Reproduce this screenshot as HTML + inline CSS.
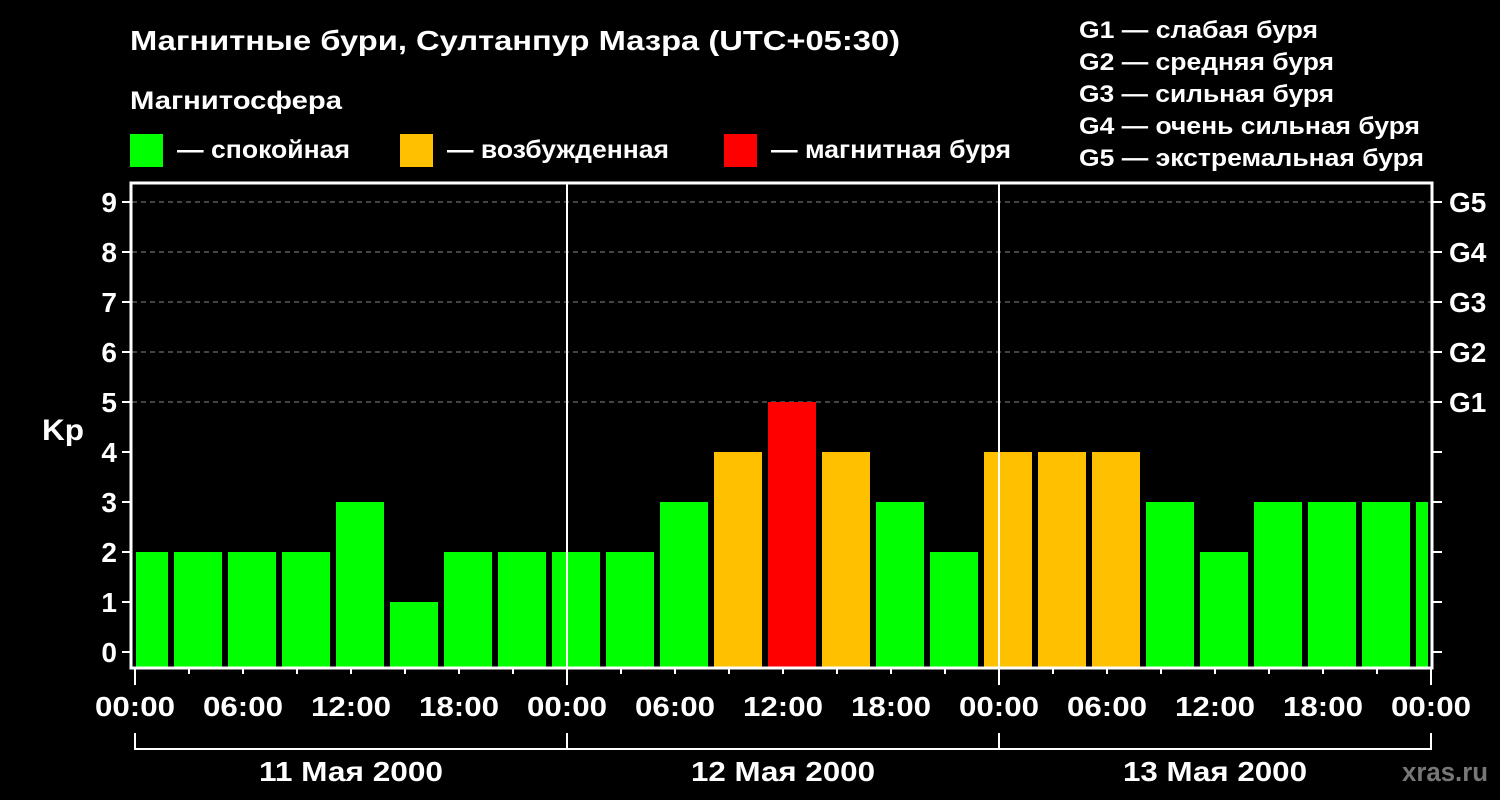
<!DOCTYPE html>
<html><head><meta charset="utf-8"><style>
body{margin:0;background:#000;width:1500px;height:800px;overflow:hidden}
svg{display:block}
text{font-family:"Liberation Sans",sans-serif;font-weight:bold;fill:#fff}
</style></head><body>
<svg width="1500" height="800" viewBox="0 0 1500 800">
<text x="130" y="50" font-size="28" textLength="770" lengthAdjust="spacingAndGlyphs">Магнитные бури, Султанпур Мазра (UTC+05:30)</text>
<text x="130" y="109" font-size="25" textLength="212" lengthAdjust="spacingAndGlyphs">Магнитосфера</text>
<rect x="130" y="134" width="33" height="33" fill="#00ff00"/>
<text x="177" y="158" font-size="25" textLength="173" lengthAdjust="spacingAndGlyphs">— спокойная</text>
<rect x="400" y="134" width="33" height="33" fill="#ffc000"/>
<text x="447" y="158" font-size="25" textLength="222" lengthAdjust="spacingAndGlyphs">— возбужденная</text>
<rect x="724" y="134" width="33" height="33" fill="#ff0000"/>
<text x="771" y="158" font-size="25" textLength="240" lengthAdjust="spacingAndGlyphs">— магнитная буря</text>
<g font-size="24">
<text x="1079" y="38" textLength="239" lengthAdjust="spacingAndGlyphs">G1 — слабая буря</text>
<text x="1079" y="70" textLength="255" lengthAdjust="spacingAndGlyphs">G2 — средняя буря</text>
<text x="1079" y="102" textLength="255" lengthAdjust="spacingAndGlyphs">G3 — сильная буря</text>
<text x="1079" y="134" textLength="341" lengthAdjust="spacingAndGlyphs">G4 — очень сильная буря</text>
<text x="1079" y="166" textLength="345" lengthAdjust="spacingAndGlyphs">G5 — экстремальная буря</text>
</g>
<g stroke="#888" stroke-width="1" stroke-dasharray="5,4">
<line x1="132" y1="202" x2="1432" y2="202"/><line x1="132" y1="252" x2="1432" y2="252"/>
<line x1="132" y1="302" x2="1432" y2="302"/><line x1="132" y1="352" x2="1432" y2="352"/>
<line x1="132" y1="402" x2="1432" y2="402"/>
</g>
<g>
<rect x="136" y="552" width="32" height="116" fill="#0f0"/>
<rect x="174" y="552" width="48" height="116" fill="#0f0"/>
<rect x="228" y="552" width="48" height="116" fill="#0f0"/>
<rect x="282" y="552" width="48" height="116" fill="#0f0"/>
<rect x="336" y="502" width="48" height="166" fill="#0f0"/>
<rect x="390" y="602" width="48" height="66" fill="#0f0"/>
<rect x="444" y="552" width="48" height="116" fill="#0f0"/>
<rect x="498" y="552" width="48" height="116" fill="#0f0"/>
<rect x="552" y="552" width="48" height="116" fill="#0f0"/>
<rect x="606" y="552" width="48" height="116" fill="#0f0"/>
<rect x="660" y="502" width="48" height="166" fill="#0f0"/>
<rect x="714" y="452" width="48" height="216" fill="#ffc000"/>
<rect x="768" y="402" width="48" height="266" fill="#f00"/>
<rect x="822" y="452" width="48" height="216" fill="#ffc000"/>
<rect x="876" y="502" width="48" height="166" fill="#0f0"/>
<rect x="930" y="552" width="48" height="116" fill="#0f0"/>
<rect x="984" y="452" width="48" height="216" fill="#ffc000"/>
<rect x="1038" y="452" width="48" height="216" fill="#ffc000"/>
<rect x="1092" y="452" width="48" height="216" fill="#ffc000"/>
<rect x="1146" y="502" width="48" height="166" fill="#0f0"/>
<rect x="1200" y="552" width="48" height="116" fill="#0f0"/>
<rect x="1254" y="502" width="48" height="166" fill="#0f0"/>
<rect x="1308" y="502" width="48" height="166" fill="#0f0"/>
<rect x="1362" y="502" width="48" height="166" fill="#0f0"/>
<rect x="1416" y="502" width="12" height="166" fill="#0f0"/>
</g>
<g stroke="#fff" stroke-width="2" fill="none">
<line x1="567" y1="183" x2="567" y2="668"/><line x1="999" y1="183" x2="999" y2="668"/>
<path d="M131 183H1432V668H131Z" stroke-width="3"/>
<path d="M122 202h9M122 252h9M122 302h9M122 352h9M122 402h9M122 452h9M122 502h9M122 552h9M122 602h9M122 652h9"/>
<path d="M1433 202h9M1433 252h9M1433 302h9M1433 352h9M1433 402h9M1433 452h9M1433 502h9M1433 552h9M1433 602h9M1433 652h9"/>
<path d="M135 668v17M567 668v17M999 668v17M1431 668v17"/>
<path d="M189 668v6M243 668v6M297 668v6M351 668v6M405 668v6M459 668v6M513 668v6M621 668v6M675 668v6M729 668v6M783 668v6M837 668v6M891 668v6M945 668v6M1053 668v6M1107 668v6M1161 668v6M1215 668v6M1269 668v6M1323 668v6M1377 668v6"/>
<path d="M135 733v16H1431V733M567 733v16M999 733v16"/>
</g>
<g font-size="28" text-anchor="end">
<text x="117" y="212">9</text><text x="117" y="262">8</text><text x="117" y="312">7</text>
<text x="117" y="362">6</text><text x="117" y="412">5</text><text x="117" y="462">4</text>
<text x="117" y="512">3</text><text x="117" y="562">2</text><text x="117" y="612">1</text><text x="117" y="662">0</text>
</g>
<text x="42" y="440" font-size="30" textLength="42" lengthAdjust="spacingAndGlyphs">Kp</text>
<g font-size="28">
<text x="1449" y="212">G5</text><text x="1449" y="262">G4</text><text x="1449" y="312">G3</text>
<text x="1449" y="362">G2</text><text x="1449" y="412">G1</text>
</g>
<g font-size="28" text-anchor="middle">
<text x="135" y="716" textLength="80" lengthAdjust="spacingAndGlyphs">00:00</text><text x="243" y="716" textLength="80" lengthAdjust="spacingAndGlyphs">06:00</text><text x="351" y="716" textLength="80" lengthAdjust="spacingAndGlyphs">12:00</text><text x="459" y="716" textLength="80" lengthAdjust="spacingAndGlyphs">18:00</text>
<text x="567" y="716" textLength="80" lengthAdjust="spacingAndGlyphs">00:00</text><text x="675" y="716" textLength="80" lengthAdjust="spacingAndGlyphs">06:00</text><text x="783" y="716" textLength="80" lengthAdjust="spacingAndGlyphs">12:00</text><text x="891" y="716" textLength="80" lengthAdjust="spacingAndGlyphs">18:00</text>
<text x="999" y="716" textLength="80" lengthAdjust="spacingAndGlyphs">00:00</text><text x="1107" y="716" textLength="80" lengthAdjust="spacingAndGlyphs">06:00</text><text x="1215" y="716" textLength="80" lengthAdjust="spacingAndGlyphs">12:00</text><text x="1323" y="716" textLength="80" lengthAdjust="spacingAndGlyphs">18:00</text>
<text x="1431" y="716" textLength="80" lengthAdjust="spacingAndGlyphs">00:00</text>
<text x="351" y="781" textLength="184" lengthAdjust="spacingAndGlyphs">11 Мая 2000</text><text x="783" y="781" textLength="184" lengthAdjust="spacingAndGlyphs">12 Мая 2000</text><text x="1215" y="781" textLength="184" lengthAdjust="spacingAndGlyphs">13 Мая 2000</text>
</g>
<text x="1402" y="781" font-size="27" textLength="86" lengthAdjust="spacingAndGlyphs" style="fill:#777">xras.ru</text>
</svg>
</body></html>
